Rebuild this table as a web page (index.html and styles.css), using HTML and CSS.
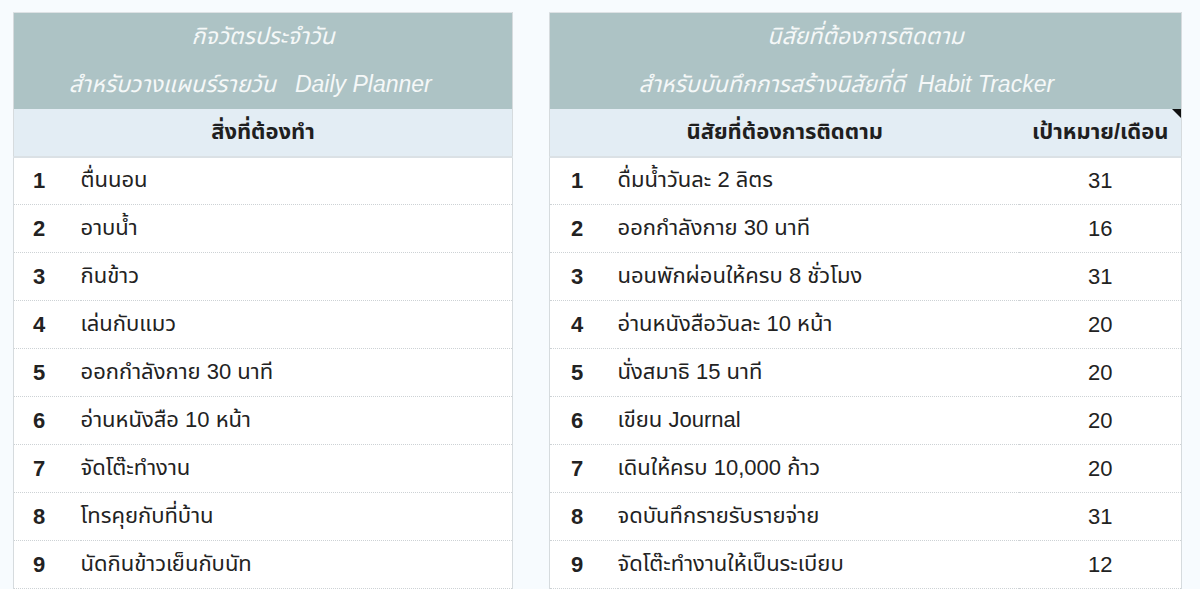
FILE: index.html
```html
<!DOCTYPE html>
<html lang="th">
<head>
<meta charset="utf-8">
<title>Planner</title>
<link rel="stylesheet" href="styles.css">
</head>
<body>
<div class="wrap">
  <table class="sheet left">
    <colgroup><col class="c-idx"><col></colgroup>
    <tr class="title"><td colspan="2">กิจวัตรประจำวัน</td></tr>
    <tr class="title"><td colspan="2">สำหรับวางแผนร์รายวัน   Daily Planner    </td></tr>
    <tr class="sub"><th colspan="2">สิ่งที่ต้องทำ</th></tr>
    <tr class="row"><td class="idx">1</td><td>ตื่นนอน</td></tr>
    <tr class="row"><td class="idx">2</td><td>อาบน้ำ</td></tr>
    <tr class="row"><td class="idx">3</td><td>กินข้าว</td></tr>
    <tr class="row"><td class="idx">4</td><td>เล่นกับแมว</td></tr>
    <tr class="row"><td class="idx">5</td><td>ออกกำลังกาย 30 นาที</td></tr>
    <tr class="row"><td class="idx">6</td><td>อ่านหนังสือ 10 หน้า</td></tr>
    <tr class="row"><td class="idx">7</td><td>จัดโต๊ะทำงาน</td></tr>
    <tr class="row"><td class="idx">8</td><td>โทรคุยกับที่บ้าน</td></tr>
    <tr class="row"><td class="idx">9</td><td>นัดกินข้าวเย็นกับนัท</td></tr>
  </table>
  <table class="sheet right">
    <colgroup><col class="c-idx"><col><col class="c-val"></colgroup>
    <tr class="title"><td colspan="3">นิสัยที่ต้องการติดตาม</td></tr>
    <tr class="title"><td colspan="3">สำหรับบันทึกการสร้างนิสัยที่ดี  Habit Tracker      </td></tr>
    <tr class="sub"><th colspan="2">นิสัยที่ต้องการติดตาม</th><th class="val note">เป้าหมาย/เดือน</th></tr>
    <tr class="row"><td class="idx">1</td><td>ดื่มน้ำวันละ 2 ลิตร</td><td class="val">31</td></tr>
    <tr class="row"><td class="idx">2</td><td>ออกกำลังกาย 30 นาที</td><td class="val">16</td></tr>
    <tr class="row"><td class="idx">3</td><td>นอนพักผ่อนให้ครบ 8 ชั่วโมง</td><td class="val">31</td></tr>
    <tr class="row"><td class="idx">4</td><td>อ่านหนังสือวันละ 10 หน้า</td><td class="val">20</td></tr>
    <tr class="row"><td class="idx">5</td><td>นั่งสมาธิ 15 นาที</td><td class="val">20</td></tr>
    <tr class="row"><td class="idx">6</td><td>เขียน Journal</td><td class="val">20</td></tr>
    <tr class="row"><td class="idx">7</td><td>เดินให้ครบ 10,000 ก้าว</td><td class="val">20</td></tr>
    <tr class="row"><td class="idx">8</td><td>จดบันทึกรายรับรายจ่าย</td><td class="val">31</td></tr>
    <tr class="row"><td class="idx">9</td><td>จัดโต๊ะทำงานให้เป็นระเบียบ</td><td class="val">12</td></tr>
  </table>
</div>
</body>
</html>
```

FILE: styles.css
```css
html, body {
  margin: 0;
  padding: 0;
  background: #f7fbfe;
}
body {
  font-family: "Liberation Sans", "Noto Sans Thai", "Noto Sans", sans-serif;
  color: #222;
  font-size: 22px;
  overflow: hidden;
  height: 589px;
}
.wrap {
  display: flex;
  gap: 36px;
  padding: 12px 13px 0 13px;
  align-items: flex-start;
}
.sheet {
  border-collapse: collapse;
  table-layout: fixed;
  background: #fff;
  border-left: 1px solid #d6dbde;
  border-right: 1px solid #d6dbde;
  border-top: 1px solid #dde2e5;
}
.left { width: 500px; }
.right { width: 633px; }
.left .c-idx { width: 67px; }
.right .c-idx { width: 68px; }
.right .c-val { width: 162px; }

.sheet td, .sheet th {
  padding: 0;
  height: 48px;
  box-sizing: border-box;
}
.title td {
  background: #adc3c5;
  color: #f5f8f8;
  font-style: italic;
  text-align: center;
  white-space: pre;
  font-size: 23px;
}
.sub th {
  background: #e3edf4;
  font-weight: bold;
  text-align: center;
  border-bottom: 2px solid #dbe1e5;
  color: #1f1f1f;
}
.note { position: relative; }
.note::after {
  content: "";
  position: absolute;
  top: 0;
  right: 0;
  width: 0;
  height: 0;
  border-top: 9px solid #111;
  border-left: 9px solid transparent;
}
.row td {
  border-bottom: 1px dotted #cdd2d5;
  background: #fff;
}
.idx {
  font-weight: bold;
  padding-left: 19px !important;
}
.right .idx { padding-left: 21px !important; }
.val { text-align: center; }
```
